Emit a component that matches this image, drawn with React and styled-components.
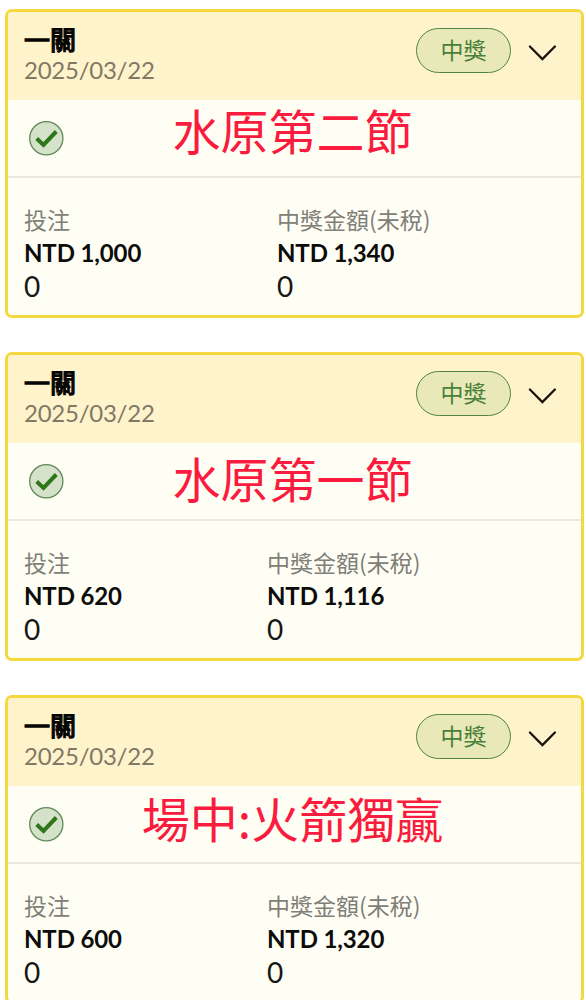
import React, { Fragment } from 'react';
import styled, { createGlobalStyle } from 'styled-components';

const BETS = [
  { id: 1, note: '水原第二節', noteHeight: 58, stake: 'NTD 1,000', prize: 'NTD 1,340', stakeWidth: 253 },
  { id: 2, note: '水原第一節', noteHeight: 68, stake: 'NTD 620', prize: 'NTD 1,116', stakeWidth: 243 },
  { id: 3, note: '場中:火箭獨贏', noteHeight: 62, stake: 'NTD 600', prize: 'NTD 1,320', stakeWidth: 243 },
];

function BetCard({ bet }) {
  return (
    <Card>
      <Header>
        <HeaderText>
          <Title>一關</Title>
          <DateText>2025/03/22</DateText>
        </HeaderText>
        <Badge>中獎</Badge>
        <Chevron viewBox="0 0 28 16">
          <path d="M1.9 1.5 L14.4 14 L26.9 1.5" />
        </Chevron>
      </Header>
      <NoteRow>
        <CheckIcon viewBox="0 0 36 36">
          <circle cx="18.3" cy="18.3" r="16.6" />
          <path d="M8.7 18.5 L15.5 24.9 L28.3 11.5" />
        </CheckIcon>
        <Note $height={bet.noteHeight}>{bet.note}</Note>
      </NoteRow>
      <Amounts>
        <Amount $width={bet.stakeWidth}>
          <Label>投注</Label>
          <Money>{bet.stake}</Money>
          <Count>0</Count>
        </Amount>
        <Amount>
          <Label>中獎金額(未稅)</Label>
          <Money>{bet.prize}</Money>
          <Count>0</Count>
        </Amount>
      </Amounts>
    </Card>
  );
}

function App() {
  return (
    <Fragment>
      <GlobalStyle />
      <List>
        {BETS.map((bet) => <BetCard key={bet.id} bet={bet} />)}
      </List>
    </Fragment>
  );
}

const GlobalStyle = createGlobalStyle`
  * {
    box-sizing: border-box;
  }
  body {
    margin: 0;
    background: #fff;
    font-family: Lato, 'Noto Sans CJK TC', sans-serif;
  }
`;
const List = styled.div`
  height: 1000px;
  overflow: hidden;
  padding: 9px 2px 0 5px;
  display: flex;
  flex-direction: column;
  gap: 34px;
`;
const Card = styled.div`
  flex: none;
  height: 309px;
  border: 3px solid #f5d83d;
  border-radius: 7px;
  background: #fffef5;
  overflow: hidden;
`;
const Header = styled.div`
  height: 88px;
  padding: 0 25px 0 16px;
  display: flex;
  align-items: flex-start;
  background: #fff3cc;
`;
const HeaderText = styled.div`
  flex: 1;
  padding-top: 12px;
`;
const Title = styled.div`
  font-family: 'Noto Sans CJK TC', sans-serif;
  font-size: 26px;
  line-height: 30px;
  color: #050503;
  -webkit-text-stroke: 1.3px #050503;
`;
const DateText = styled.div`
  margin-top: 2px;
  font-size: 24px;
  line-height: 28px;
  letter-spacing: -0.25px;
  color: #7f7965;
`;
const Badge = styled.div`
  width: 95px;
  height: 45px;
  margin-top: 16px;
  border: 1px solid #4f853f;
  border-radius: 23px;
  background: #e9e8b8;
  color: #48803a;
  font-family: 'Noto Sans CJK TC', sans-serif;
  font-size: 23px;
  line-height: 41px;
  text-align: center;
`;
const Chevron = styled.svg`
  width: 28px;
  height: 16px;
  margin: 33px 0 0 17px;
  overflow: visible;
  fill: none;
  stroke: #17140d;
  stroke-width: 2.3;
  stroke-linecap: round;
`;
const NoteRow = styled.div`
  height: 78px;
  padding: 0 24px 0 20px;
  display: grid;
  grid-template-columns: 1fr auto 1fr;
  border-bottom: 2px solid #ebe7e1;
`;
const CheckIcon = styled.svg`
  width: 36px;
  height: 36px;
  margin-top: 20px;

  circle {
    fill: #d3e2c9;
    stroke: #62885a;
    stroke-width: 1.3;
  }
  path {
    fill: none;
    stroke: #2f7519;
    stroke-width: 4;
  }
`;
const Note = styled.div`
  font-family: 'Noto Sans CJK TC', sans-serif;
  font-size: 48px;
  line-height: ${props => props.$height}px;
  color: #fa1c3e;
  white-space: nowrap;
`;
const Amounts = styled.div`
  padding: 25px 16px 0;
  display: flex;
`;
const Amount = styled.div`
  width: ${props => props.$width ? `${props.$width}px` : 'auto'};
`;
const Label = styled.div`
  font-family: 'Noto Sans CJK TC', sans-serif;
  font-size: 23px;
  line-height: 32px;
  color: #807f78;
`;
const Money = styled.div`
  font-size: 24px;
  font-weight: 700;
  line-height: 36px;
  letter-spacing: -0.12px;
  color: #0c0c0a;
`;
const Count = styled.div`
  font-size: 28px;
  line-height: 30px;
  color: #171714;
`;

export default App;
